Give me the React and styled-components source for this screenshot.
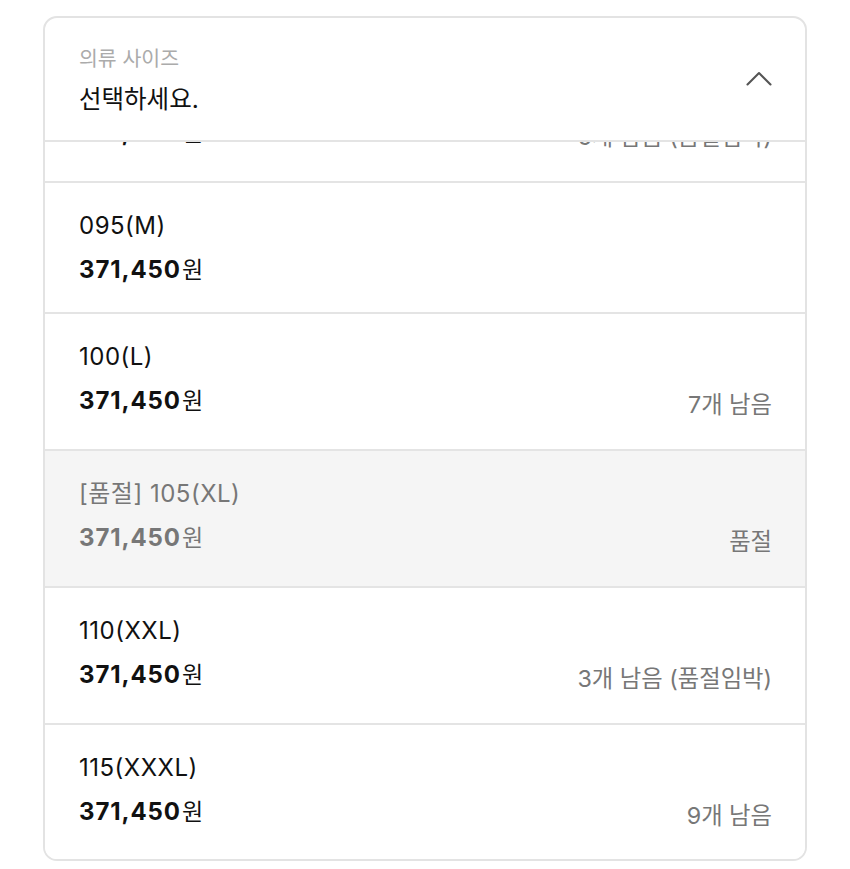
import React, { useLayoutEffect, useRef } from 'react';
import styled, { createGlobalStyle } from 'styled-components';

const GlobalStyle = createGlobalStyle`
  body {
    margin: 0;
    background: #ffffff;
    font-family: Inter, "Noto Sans CJK KR", "Noto Sans", sans-serif;
    color: #111111;
  }
  * {
    box-sizing: border-box;
  }
`;

const Card = styled.div`
  width: 764px;
  margin: 16px auto 0;
  border: 2px solid #e3e3e3;
  border-radius: 14px;
  overflow: hidden;
  background: #fff;
`;

const Header = styled.div`
  display: flex;
  justify-content: space-between;
  align-items: center;
  padding: 29px 33px 26px 34px;
  border-bottom: 2px solid #e4e4e4;
`;

const HeaderText = styled.div`
  display: flex;
  flex-direction: column;
`;

const Label = styled.div`
  font-size: 20.5px;
  line-height: 24px;
  color: #ababab;
`;

const Title = styled.div`
  margin-top: 13px;
  font-size: 24.5px;
  line-height: 30px;
  color: #111;
`;

const Chevron = styled.svg`
  flex-shrink: 0;
  margin-bottom: 5px;
`;

const Viewport = styled.div`
  position: relative;
  height: 717px;
  overflow: hidden;
`;

const Row = styled.div`
  display: grid;
  grid-template-columns: 1fr auto;
  row-gap: 16px;
  padding: 29px 33px 28px 34px;
  background: ${(p) => (p.soldOut ? '#f5f5f5' : '#fff')};
  border-top: ${(p) => (p.first ? 'none' : '2px solid #e4e4e4')};
`;

const Name = styled.div`
  grid-column: 1 / 3;
  font-size: 24px;
  line-height: 28px;
  color: ${(p) => (p.soldOut ? '#777' : '#111')};
  letter-spacing: 0.5px;
`;

const Price = styled.div`
  align-self: start;
  font-size: 24px;
  line-height: 28px;
  font-weight: 700;
  color: ${(p) => (p.soldOut ? '#777' : '#111')};
  letter-spacing: 0.9px;
`;

const Won = styled.span`
  margin-left: 1px;
  font-size: 23px;
  font-weight: 400;
  letter-spacing: 0;
`;

const Stock = styled.div`
  font-size: 23.3px;
  line-height: 36px;
  margin-bottom: -2px;
  color: #777;
  text-align: right;
`;

const ChevronUp = () => (
  <Chevron width="26" height="15" viewBox="0 0 26 15" fill="none">
    <path d="M1.5 13.5 L13 2 L24.5 13.5" stroke="#555" strokeWidth="2.1" strokeLinecap="round" strokeLinejoin="round" />
  </Chevron>
);

const sizes = [
  { name: '085(XS)', price: '371,450', stock: '2개 남음 (품절임박)' },
  { name: '090(S)', price: '371,450', stock: '5개 남음 (품절임박)' },
  { name: '095(M)', price: '371,450', stock: '', anchor: true },
  { name: '100(L)', price: '371,450', stock: '7개 남음' },
  { name: '[품절] 105(XL)', price: '371,450', stock: '품절', soldOut: true },
  { name: '110(XXL)', price: '371,450', stock: '3개 남음 (품절임박)' },
  { name: '115(XXXL)', price: '371,450', stock: '9개 남음' },
];

export default function App() {
  const viewportRef = useRef(null);
  const anchorRef = useRef(null);

  useLayoutEffect(() => {
    // keep the list scrolled so that 095(M) sits just under the header
    if (viewportRef.current && anchorRef.current) {
      viewportRef.current.scrollTop = anchorRef.current.offsetTop - 39;
    }
  }, []);

  return (
    <>
      <GlobalStyle />
      <Card>
        <Header>
          <HeaderText>
            <Label>의류 사이즈</Label>
            <Title>선택하세요.</Title>
          </HeaderText>
          <ChevronUp />
        </Header>
        <Viewport ref={viewportRef}>
          {sizes.map((s, i) => (
            <Row
              key={s.name}
              first={i === 0}
              soldOut={s.soldOut}
              ref={s.anchor ? anchorRef : undefined}
            >
              <Name soldOut={s.soldOut}>{s.name}</Name>
              <Price soldOut={s.soldOut}>
                {s.price}
                <Won>원</Won>
              </Price>
              {s.stock ? <Stock>{s.stock}</Stock> : null}
            </Row>
          ))}
        </Viewport>
      </Card>
    </>
  );
}
